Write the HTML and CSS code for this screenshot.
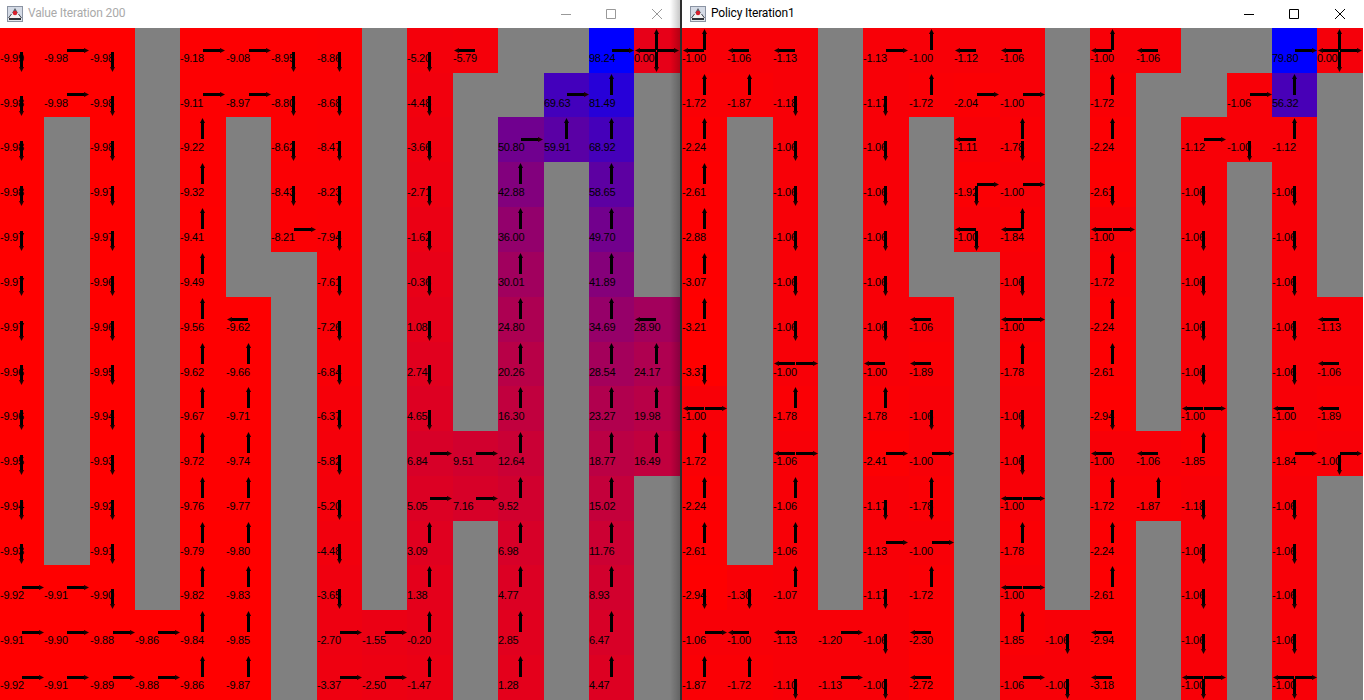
FILE: index.html
```html
<!DOCTYPE html>
<html lang="en">
<head>
<meta charset="utf-8">
<title>Value Iteration and Policy Iteration</title>
<link rel="stylesheet" href="styles.css">
</head>
<body>
<section class="win win-left">
  <header class="bar inactive">
    <svg class="app" viewBox="0 0 16 16"><rect x=".5" y=".5" width="15" height="15" fill="#d5dbe6" stroke="#8b94a3"/><path d="M1.5 12l3-4h7l3 4v2.5h-13z" fill="#f2f2f2"/><path d="M1.5 12l3-4M14.500 12l-3-4" stroke="#3e434c" fill="none"/><path d="M2 12h12v2H2z" fill="#2f3339"/><path d="M5 7l3-5 3 5z" fill="#5a5f68"/><circle cx="8" cy="7" r="2.200" fill="#d8202c"/></svg>
    <span class="title">Value Iteration 200</span>
    <span class="ctl">
      <svg viewBox="0 0 10 10"><path d="M0 5.500h10"/></svg>
      <svg viewBox="0 0 10 10"><path d="M.5.500h9v9h-9z"/></svg>
      <svg viewBox="0 0 10 10"><path d="M0 0l10 10M10 0L0 10"/></svg>
    </span>
  </header>
  <div class="grid" id="value"></div>
</section>
<section class="win win-right">
  <header class="bar">
    <svg class="app" viewBox="0 0 16 16"><rect x=".5" y=".5" width="15" height="15" fill="#d5dbe6" stroke="#8b94a3"/><path d="M1.5 12l3-4h7l3 4v2.5h-13z" fill="#f2f2f2"/><path d="M1.5 12l3-4M14.500 12l-3-4" stroke="#3e434c" fill="none"/><path d="M2 12h12v2H2z" fill="#2f3339"/><path d="M5 7l3-5 3 5z" fill="#5a5f68"/><circle cx="8" cy="7" r="2.200" fill="#d8202c"/></svg>
    <span class="title">Policy Iteration1</span>
    <span class="ctl">
      <svg viewBox="0 0 10 10"><path d="M0 5.500h10"/></svg>
      <svg viewBox="0 0 10 10"><path d="M.5.500h9v9h-9z"/></svg>
      <svg viewBox="0 0 10 10"><path d="M0 0l10 10M10 0L0 10"/></svg>
    </span>
  </header>
  <div class="grid" id="policy"></div>
</section>
<script src="grid.js"></script>
</body>
</html>
```
FILE: styles.css
```css
* { box-sizing: border-box; }
html, body { margin: 0; height: 700px; overflow: hidden; background: #fff; }
body { display: flex; font-family: "Liberation Sans", Arial, sans-serif; }

.win { position: relative; display: flex; flex-direction: column; height: 700px; }
.win-left { width: 680px; flex: none; }
.win-left::after {
  content: ""; position: absolute; top: 0; right: 0; bottom: 0; width: 10px;
  background: linear-gradient(to right, rgba(0,0,0,0), rgba(0,0,0,.22));
}
.win-right { width: 684px; flex: none; border-left: 2px solid #2e2e2e; padding-right: 1px; }

.bar { height: 28px; flex: none; display: flex; align-items: center; background: #fff; color: #000; padding-left: 7px; }
.win-right .bar { padding-left: 8px; }
.app { width: 16px; height: 16px; flex: none; }
.title { margin: 0 0 2px 5px; font: 12px/16px Roboto, sans-serif; letter-spacing: -.15px; white-space: nowrap; }
.inactive .title { color: #aaa; }
.ctl { margin-left: auto; display: flex; gap: 35px; padding-right: 18px; }
.ctl svg { width: 10px; height: 10px; fill: none; stroke: #000; stroke-width: 1; overflow: visible; }
.ctl svg:last-child { margin-left: 1px; }
.inactive .ctl svg { stroke: #999; }

.grid {
  display: grid;
  grid-template-rows: 45px 44px 45px 45px 45px 45px 45px 44px 45px 45px 45px 44px 45px 45px 45px;
  grid-template-columns: 44px 46px 45px 45px 46px 45px 46px 45px 45px 46px 45px 46px 45px 45px 46px;
}
#policy { grid-template-columns: 45px 46px 45px 45px 46px 45px 46px 45px 45px 46px 45px 46px 45px 45px 46px; }

.cell { position: relative; padding-top: 24px; font-size: 11px; letter-spacing: -.25px; line-height: 13px; color: #000; white-space: nowrap; }
.wall { background: #808080; }

.arrow { position: absolute; display: block; }
.shaft { fill: #000; }
.head { fill: #1c0000; }
.up .head { fill: #000; }
.up { left: calc(50% - 2.75px); top: calc(50% - 21.25px); width: 5px; height: 21px; }
.down { left: calc(50% - 2.75px); top: calc(50% + 1px); width: 5px; height: 20px; }
.right { left: calc(50% + .25px); top: calc(50% - 2.75px); width: 22px; height: 5px; }
.left { left: calc(50% - 21.75px); top: calc(50% - 2.75px); width: 21px; height: 5px; }
```
FILE: grid.js
```js
var VALUE = [
"-9.99d -9.98r -9.98d # -9.18r -9.08r -8.95d -8.86d # -5.20d -5.79l # # 98.24r 0.00udlr",
"-9.98d -9.98r -9.98d # -9.11r -8.97r -8.80d -8.68d # -4.48d # # 69.63r 81.49u #",
"-9.98d # -9.98d # -9.22u # -8.62d -8.47d # -3.66d # 50.80r 59.91u 68.92u #",
"-9.98d # -9.97d # -9.32u # -8.43d -8.23d # -2.71d # 42.88u # 58.65u #",
"-9.97d # -9.97d # -9.41u # -8.21r -7.94d # -1.62d # 36.00u # 49.70u #",
"-9.97d # -9.96d # -9.49u # # -7.61d # -0.36d # 30.01u # 41.89u #",
"-9.97d # -9.96d # -9.56u -9.62l # -7.26d # 1.08d # 24.80u # 34.69u 28.90l",
"-9.96d # -9.95d # -9.62u -9.66u # -6.84d # 2.74d # 20.26u # 28.54u 24.17u",
"-9.96d # -9.94d # -9.67u -9.71u # -6.37d # 4.65d # 16.30u # 23.27u 19.98u",
"-9.95d # -9.93d # -9.72u -9.74u # -5.82d # 6.84r 9.51r 12.64u # 18.77u 16.49u",
"-9.94d # -9.92d # -9.76u -9.77u # -5.20d # 5.05r 7.16r 9.52u # 15.02u #",
"-9.93d # -9.91d # -9.79u -9.80u # -4.48d # 3.09u # 6.98u # 11.76u #",
"-9.92r -9.91r -9.90d # -9.82u -9.83u # -3.65d # 1.38u # 4.77u # 8.93u #",
"-9.91r -9.90r -9.88r -9.86r -9.84u -9.85u # -2.70r -1.55r -0.20u # 2.85u # 6.47u #",
"-9.92r -9.91r -9.89r -9.88r -9.86u -9.87u # -3.37r -2.50r -1.47u # 1.28u # 4.47u #"
];
var POLICY = [
"-1.00ul -1.06l -1.13l # -1.13r -1.00u -1.12l -1.06l # -1.00ul -1.06l # # 79.80r 0.00udlr",
"-1.72u -1.87u -1.18d # -1.17d -1.72u -2.04r -1.00r # -1.72u # # -1.06r 56.32u #",
"-2.24u # -1.06d # -1.06d # -1.11l -1.78ud # -2.24u # -1.12r -1.00d -1.12u #",
"-2.61u # -1.06d # -1.06d # -1.92dr -1.00r # -2.61d # -1.06d # -1.06d #",
"-2.88u # -1.06d # -1.06d # -1.00ld -1.84ul # -1.00lr # -1.06d # -1.06d #",
"-3.07u # -1.06d # -1.06d # # -1.06d # -1.72u # -1.06d # -1.06d #",
"-3.21u # -1.06d # -1.06d -1.06l # -1.00lr # -2.24u # -1.06d # -1.06d -1.13l",
"-3.37d # -1.00lr # -1.00l -1.89l # -1.78u # -2.61u # -1.06d # -1.06d -1.06l",
"-1.00lr # -1.78u # -1.78u -1.06d # -1.06d # -2.94d # -1.00lr # -1.00l -1.89l",
"-1.72u # -1.06lr # -2.41r -1.00r # -1.06d # -1.00l -1.06l -1.85u # -1.84r -1.00dr",
"-2.24u # -1.06u # -1.17d -1.78ud # -1.00lr # -1.72u -1.87u -1.18d # -1.06d #",
"-2.61u # -1.06u # -1.13r -1.00r # -1.78u # -2.24u # -1.06d # -1.06d #",
"-2.94d -1.30d -1.07u # -1.17d -1.72u # -1.00lr # -2.61u # -1.06d # -1.06d #",
"-1.06r -1.00l -1.13l -1.20r -1.06d -2.30l # -1.85u -1.06d -2.94l # -1.06d # -1.06d #",
"-1.87u -1.72u -1.10d -1.13r -1.00d -2.72l # -1.06r -1.00d -3.18l # -1.00ldr # -1.00ldr #"
];

/* name, viewBox, shaft rectangle, head triangle */
var ARROWS = {
  u: ["up", "0 0 5 21", "M1 5h3v16H1z", "M2.5 0L5 5H0z"],
  d: ["down", "0 0 5 20", "M1 0h3v15H1z", "M0 15h5l-2.500 5z"],
  r: ["right", "0 0 22 5", "M0 1h17v3H0z", "M17 0l5 2.500L17 5z"],
  l: ["left", "0 0 21 5", "M5 1h16v3H5z", "M5 0L0 2.500 5 5z"]
};

function arrowMarkup(d) {
  var a = ARROWS[d];
  return '<svg class="arrow ' + a[0] + '" viewBox="' + a[1] + '"><path class="shaft" d="' + a[2] +
    '"/><path class="head" d="' + a[3] + '"/></svg>';
}

function fill(id, rows) {
  var grid = document.getElementById(id);
  var cells = rows.join(" ").split(" ").map(function (token) {
    var m = /^(-?[\d.]+)([udlr]*)$/.exec(token);
    return m ? { text: m[1], value: parseFloat(m[1]), dirs: m[2] } : null;
  });
  var values = cells.filter(Boolean).map(function (c) { return c.value; });
  var min = Math.min.apply(null, values);
  var max = Math.max.apply(null, values);
  cells.forEach(function (c) {
    var el = document.createElement("div");
    el.className = "cell";
    if (!c) {
      el.classList.add("wall");
    } else {
      var t = (c.value - min) / (max - min);
      el.style.backgroundColor = "rgb(" + Math.round(255 * (1 - t)) + ",0," + Math.round(255 * t) + ")";
      el.innerHTML = c.text + c.dirs.split("").map(arrowMarkup).join("");
    }
    grid.appendChild(el);
  });
}
fill("value", VALUE);
fill("policy", POLICY);
```
